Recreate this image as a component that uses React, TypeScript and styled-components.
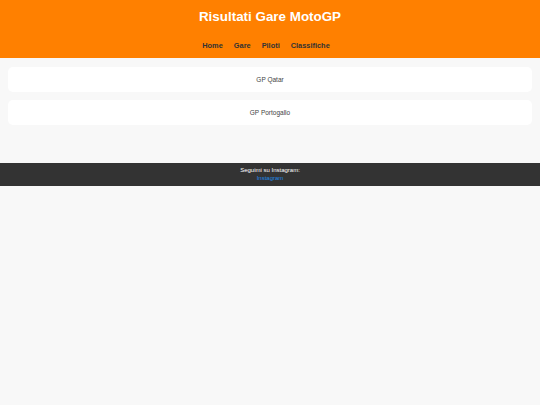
import React from "react";
import styled, { createGlobalStyle } from "styled-components";

const Global = createGlobalStyle`
  html, body { margin: 0; padding: 0; background: #f8f8f8; }
  body { font-family: "Liberation Sans", Arial, sans-serif; }
`;

const Header = styled.header`
  background: #ff8000;
  height: 58px;
  box-sizing: border-box;
  padding-top: 8px;
  display: flex;
  flex-direction: column;
  align-items: center;
`;

const Title = styled.h1`
  margin: 0;
  color: #ffffff;
  font-size: 13.4px;
  font-weight: bold;
  line-height: 17px;
`;

const Nav = styled.nav`
  margin-top: 16px;
  padding-right: 8px;
  display: flex;
  gap: 11px;
`;

const NavLink = styled.a`
  color: #333333;
  font-size: 7.4px;
  font-weight: bold;
  text-decoration: none;
  line-height: 10px;
`;

const Main = styled.main`
  padding: 9px 8px 38px;
  display: flex;
  flex-direction: column;
  gap: 8px;
`;

const Card = styled.div`
  background: #ffffff;
  border-radius: 5px;
  height: 25px;
  display: flex;
  align-items: center;
  justify-content: center;
  font-size: 6.5px;
  color: #444444;
`;

const Footer = styled.footer`
  background: #333333;
  height: 23px;
  display: flex;
  flex-direction: column;
  align-items: center;
  justify-content: center;
  font-size: 6px;
  line-height: 7.5px;
  color: #ffffff;
`;

const FooterLink = styled.a`
  color: #1e88e5;
  text-decoration: none;
`;

export default function App() {
  return (
    <>
      <Global />
      <Header>
        <Title>Risultati Gare MotoGP</Title>
        <Nav>
          <NavLink href="#">Home</NavLink>
          <NavLink href="#">Gare</NavLink>
          <NavLink href="#">Piloti</NavLink>
          <NavLink href="#">Classifiche</NavLink>
        </Nav>
      </Header>
      <Main>
        <Card>GP Qatar</Card>
        <Card>GP Portogallo</Card>
      </Main>
      <Footer>
        <span>Seguimi su Instagram:</span>
        <FooterLink href="#">Instagram</FooterLink>
      </Footer>
    </>
  );
}
